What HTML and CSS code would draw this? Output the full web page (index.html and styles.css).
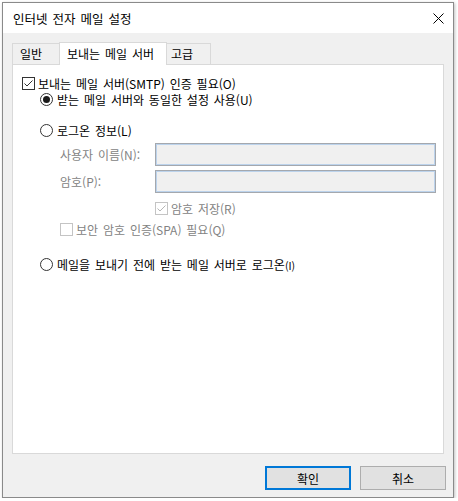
FILE: index.html
```html
<!DOCTYPE html>
<html lang="ko">
<head>
    <meta charset="UTF-8">
    <title>인터넷 전자 메일 설정</title>
    <link rel="stylesheet" href="styles.css">
</head>
<body>
    <div class="window">
        <!-- 제목 표시줄 -->
        <div class="titlebar">
            <span class="title">인터넷 전자 메일 설정</span>
            <svg class="close" width="11" height="11" viewBox="0 0 11 11">
                <path d="M0.5 0.5 L10.5 10.5 M10.5 0.5 L0.5 10.5" stroke="#000" stroke-width="1" fill="none"/>
            </svg>
        </div>

        <div class="client">
            <div class="tabs">
                <div class="tab tab-general">일반</div>
                <div class="tab tab-outgoing active">보내는 메일 서버</div>
                <div class="tab tab-advanced">고급</div>
            </div>

            <div class="panel">
                <div class="row row-auth">
                    <svg class="box" width="13" height="13" viewBox="0 0 13 13">
                        <rect x="0.5" y="0.5" width="12" height="12" fill="#fff" stroke="#333"/>
                        <path d="M2.5 6.5 L5 9 L10.5 3.5" stroke="#333" fill="none"/>
                    </svg>
                    <span>보내는 메일 서버(SMTP) 인증 필요(O)</span>
                </div>

                <div class="row row-same">
                    <svg class="box" width="13" height="13" viewBox="0 0 13 13">
                        <circle cx="6.5" cy="6.5" r="6" fill="#fff" stroke="#333"/>
                        <circle cx="6.5" cy="6.5" r="3.5" fill="#1a1a1a"/>
                    </svg>
                    <span>받는 메일 서버와 동일한 설정 사용(U)</span>
                </div>

                <div class="row row-logon">
                    <svg class="box" width="13" height="13" viewBox="0 0 13 13">
                        <circle cx="6.5" cy="6.5" r="6" fill="#fff" stroke="#333"/>
                    </svg>
                    <span>로그온 정보(L)</span>
                </div>

                <div class="field field-user">
                    <span class="field-label">사용자 이름(N):</span>
                    <div class="input"></div>
                </div>
                <div class="field field-pass">
                    <span class="field-label">암호(P):</span>
                    <div class="input"></div>
                </div>

                <div class="row row-save disabled">
                    <svg class="box" width="13" height="13" viewBox="0 0 13 13">
                        <rect x="0.5" y="0.5" width="12" height="12" fill="#fff" stroke="#c4c4c4"/>
                        <path d="M2.5 6.5 L5 9 L10.5 3.5" stroke="#b5b5b5" fill="none"/>
                    </svg>
                    <span>암호 저장(R)</span>
                </div>

                <div class="row row-spa disabled">
                    <svg class="box" width="13" height="13" viewBox="0 0 13 13">
                        <rect x="0.5" y="0.5" width="12" height="12" fill="#fff" stroke="#c4c4c4"/>
                    </svg>
                    <span>보안 암호 인증(SPA) 필요(Q)</span>
                </div>

                <div class="row row-before">
                    <svg class="box" width="13" height="13" viewBox="0 0 13 13">
                        <circle cx="6.5" cy="6.5" r="6" fill="#fff" stroke="#333"/>
                    </svg>
                    <span>메일을 보내기 전에 받는 메일 서버로 로그온<small>(I)</small></span>
                </div>
            </div>

            <div class="buttons">
                <div class="btn btn-default">확인</div>
                <div class="btn">취소</div>
            </div>
        </div>
    </div>
</body>
</html>
```

FILE: styles.css
```css
body {
    margin: 0;
    background: #fff;
}

.window {
    width: 452px;
    height: 496px;
    margin: 2px 0 0 2px;
    box-sizing: border-box;
    border: 1px solid #8a8a8a;
    background: #f0f0f0;
    box-shadow: 1px 1px 3px rgba(0, 0, 0, .25);
    display: flex;
    flex-direction: column;
    font-family: "Noto Sans CJK KR", "Noto Sans", sans-serif;
    font-size: 12px;
    word-spacing: 1.5px;
    color: #000;
}

/* 제목 표시줄 */
.titlebar {
    height: 30px;
    flex: none;
    background: #fff;
    display: flex;
    align-items: center;
    justify-content: space-between;
    padding: 0 9px 0 10px;
}
.title {
    font-size: 12.5px;
}
.close {
    display: block;
}

.client {
    flex: 1;
    padding: 9px 0 0 9px;
    display: flex;
    flex-direction: column;
}

/* 탭 */
.tabs {
    display: flex;
    align-items: flex-end;
    height: 22px;
}
.tab {
    box-sizing: border-box;
    height: 21px;
    border: 1px solid #d9d9d9;
    border-bottom: none;
    background: #f0f0f0;
    display: flex;
    align-items: center;
    line-height: 1;
}
.tab-general {
    width: 48px;
    padding-left: 7px;
}
.tab-outgoing {
    width: 108px;
    margin-left: -1px;
    padding-left: 7px;
}
.tab-advanced {
    width: 45px;
    margin-left: -1px;
    padding-left: 4px;
}
.tab.active {
    position: relative;
    z-index: 1;
    height: 23px;
    margin-bottom: -1px;
    background: #fff;
    padding-bottom: 1px;
}

.panel {
    width: 432px;
    height: 390px;
    box-sizing: border-box;
    border: 1px solid #d9d9d9;
    background: #fff;
    padding: 10px 0 0 9px;
}

/* 체크박스, 라디오 줄 */
.row {
    display: flex;
    align-items: center;
    height: 16px;
    gap: 3px;
    white-space: nowrap;
}
.row .box {
    flex: none;
    display: block;
}
.row-same {
    margin-left: 18px;
    gap: 4px;
}
.row-logon {
    margin: 15px 0 0 18px;
    gap: 4px;
}
.row-save {
    margin: 7px 0 0 133px;
}
.row-spa {
    margin: 5px 0 0 38px;
}
.row-before {
    margin: 19px 0 0 18px;
    gap: 4px;
}
.row-before small {
    font-size: 10.5px;
}
.disabled {
    color: #838383;
}

.field {
    display: flex;
    align-items: center;
    height: 23px;
    margin-left: 38px;
    color: #838383;
}
.field-user {
    margin-top: 5px;
}
.field-pass {
    margin-top: 4px;
}
.field-label {
    width: 95px;
}
.input {
    width: 281px;
    height: 23px;
    box-sizing: border-box;
    border: 1px solid #a4a8ae;
    box-shadow: inset 0 0 0 1px #bcd3ec;
    background: #f0f0f0;
}

/* 하단 버튼 */
.buttons {
    display: flex;
    justify-content: flex-end;
    gap: 9px;
    margin-top: 12px;
    padding-right: 7px;
}
.btn {
    width: 86px;
    height: 24px;
    box-sizing: border-box;
    border: 1px solid #adadad;
    background: #e1e1e1;
    display: flex;
    align-items: center;
    justify-content: center;
}
.btn-default {
    border: 2px solid #0078d7;
}
```
